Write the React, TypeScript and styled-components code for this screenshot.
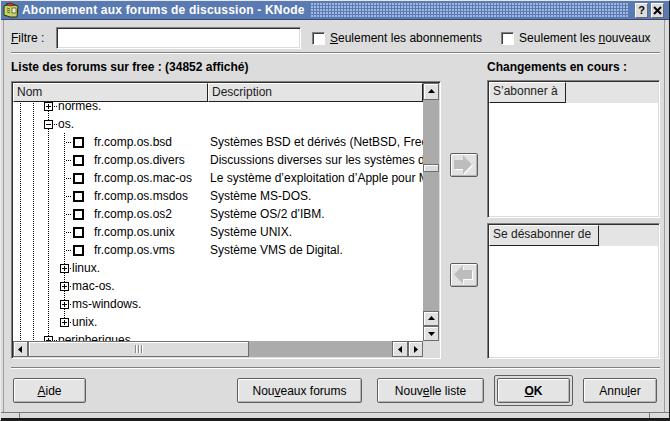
import React from 'react';
import styled, { createGlobalStyle, css } from 'styled-components';

const GlobalStyle = createGlobalStyle`
  html, body {
    margin: 0;
    padding: 0;
    background: #dcdcdc;
  }
  body {
    font-family: "Liberation Sans", Arial, sans-serif;
    font-size: 12px;
    color: #000;
  }
  * {
    box-sizing: border-box;
  }
`;

const raised = css`
  border: 1px solid;
  border-color: #fff #6a6a6a #6a6a6a #fff;
`;

const sunken = css`
  border: 1px solid;
  border-color: #808080 #fff #fff #808080;
  box-shadow: inset 1px 1px 0 #303030, inset -1px -1px 0 #dcdcdc;
`;

const Window = styled.div`
  width: 670px;
  height: 421px;
  display: flex;
  flex-direction: column;
  background: #dcdcdc;
  border: 1px solid;
  border-color: #e8e8e8 #202020 #202020 #e8e8e8;
  overflow: hidden;
`;

const TitleBar = styled.div`
  height: 19px;
  flex: none;
  display: flex;
  align-items: center;
  background: #5a7ab4;
  border-bottom: 1px solid #33496f;
  padding: 0 5px 0 2px;
  color: #fff;
`;

const TitleText = styled.span`
  margin-left: 3px;
  font-weight: bold;
  font-size: 12px;
  letter-spacing: 0.2px;
  white-space: nowrap;
`;

const TitleGrip = styled.div`
  flex: 1;
  align-self: stretch;
  margin: 2px 4px 2px 6px;
  background-image: radial-gradient(circle at 1px 1px, #a3b9e2 0.8px, transparent 1.1px);
  background-size: 3px 3px;
`;

const TitleButton = styled.div`
  width: 13px;
  height: 15px;
  margin-left: 3px;
  display: flex;
  align-items: center;
  justify-content: center;
  background: #dcdcdc;
  ${raised};
  color: #000;
  font-weight: bold;
  font-size: 11px;
  line-height: 1;
`;

const Frame = styled.div`
  flex: 1;
  display: flex;
  flex-direction: column;
  margin: 0 4px 0 2px;
  padding: 7px 4px 0 7px;
  border-left: 1px solid #9c9c9c;
  border-right: 1px solid #9c9c9c;
`;

const BottomBar = styled.div`
  height: 8px;
  flex: none;
  display: flex;
  border-top: 1px solid #7a7a7a;
  border-bottom: 2px solid #1a1a1a;
`;

const GripSegment = styled.div<{ $w?: number }>`
  width: ${(p) => (p.$w ? `${p.$w}px` : 'auto')};
  flex: ${(p) => (p.$w ? 'none' : '1')};
  border-right: 1px solid #7a7a7a;
  &:last-child {
    border-right: none;
  }
`;

const Key = styled.span`
  text-decoration: underline;
`;

const FilterRow = styled.div`
  height: 22px;
  display: flex;
  align-items: center;
  flex: none;
`;

const FieldLabel = styled.span`
  width: 45px;
  flex: none;
`;

const TextInput = styled.input`
  width: 245px;
  height: 22px;
  margin: 0;
  padding: 0 4px;
  background: #fff;
  ${sunken};
  font: inherit;
  outline: none;
`;

const CheckOption = styled.label<{ $ml: number }>`
  display: flex;
  align-items: center;
  gap: 5px;
  margin-left: ${(p) => p.$ml}px;
  white-space: nowrap;
`;

const CheckBox = styled.span`
  width: 13px;
  height: 13px;
  background: #fff;
  border: 1px solid;
  border-color: #808080 #fff #fff #808080;
  box-shadow: inset 1px 1px 0 #404040;
`;

const Separator = styled.div<{ $mt: number }>`
  height: 2px;
  flex: none;
  margin-top: ${(p) => p.$mt}px;
  border-top: 1px solid #808080;
  border-bottom: 1px solid #fff;
`;

const Panels = styled.div`
  height: 305px;
  flex: none;
  display: flex;
`;

const Column = styled.div<{ $w: number }>`
  width: ${(p) => p.$w}px;
  flex: none;
  display: flex;
  flex-direction: column;
`;

const SectionLabel = styled.div<{ $h: number }>`
  height: ${(p) => p.$h}px;
  flex: none;
  padding-top: 6px;
  line-height: 15px;
  font-weight: bold;
  white-space: nowrap;
`;

const ListBox = styled.div`
  height: 278px;
  display: grid;
  grid-template-columns: 1fr 16px;
  grid-template-rows: 1fr 16px;
  ${sunken};
  padding: 1px;
  background: #dcdcdc;
`;

const ListMain = styled.div`
  display: flex;
  flex-direction: column;
  min-height: 0;
  overflow: hidden;
  background: #fff;
`;

const Header = styled.div`
  height: 19px;
  flex: none;
  display: flex;
  background: #e4e4e4;
`;

const HeaderCell = styled.div<{ $w?: number; $fill?: boolean }>`
  width: ${(p) => (p.$w ? `${p.$w}px` : 'auto')};
  flex: ${(p) => (p.$fill ? '1' : 'none')};
  padding: ${(p) => (p.$w || p.$fill ? '0 3px' : '0 7px 0 3px')};
  line-height: 17px;
  background: #e4e4e4;
  color: #202020;
  white-space: nowrap;
  ${raised};
  border-right-color: #202020;
  border-bottom-color: #202020;
`;

const Viewport = styled.div`
  flex: 1;
  overflow: hidden;
`;

const Rows = styled.div`
  margin-top: -5px;
`;

const Row = styled.div`
  height: 18px;
  display: flex;
  line-height: 18px;
  white-space: nowrap;
`;

const NameCell = styled.div`
  width: 195px;
  flex: none;
  display: flex;
  overflow: hidden;
`;

const DescCell = styled.div`
  padding-left: 2px;
`;

const Guide = styled.span<{ $w: number; $v: 'full' | 'top'; $h?: boolean }>`
  position: relative;
  flex: none;
  width: ${(p) => p.$w}px;
  height: 18px;
  padding: 5px 0 0 3px;
  &::before {
    content: '';
    position: absolute;
    left: 7px;
    top: 0;
    width: 1px;
    height: ${(p) => (p.$v === 'top' ? '9px' : '18px')};
    background: repeating-linear-gradient(to bottom, #000 0 1px, transparent 1px 2px);
  }
  &::after {
    content: '';
    display: ${(p) => (p.$h ? 'block' : 'none')};
    position: absolute;
    left: 8px;
    right: 0;
    top: 9px;
    height: 1px;
    background: repeating-linear-gradient(to right, transparent 0 1px, #000 1px 2px);
  }
`;

const ExpanderBox = styled.svg`
  position: relative;
  z-index: 1;
  display: block;
`;

const TreeCheck = styled.span`
  width: 11px;
  height: 11px;
  flex: none;
  margin: 4px 0 0 2px;
  border: 2px solid #000;
  background: #fff;
`;

const NodeLabel = styled.span<{ $ml: number }>`
  margin-left: ${(p) => p.$ml}px;
`;

const VScroll = styled.div`
  grid-row: 1;
  grid-column: 2;
  display: flex;
  flex-direction: column;
`;

const HScroll = styled.div`
  grid-row: 2;
  grid-column: 1;
  display: flex;
`;

const Corner = styled.div`
  grid-row: 2;
  grid-column: 2;
  background: #dcdcdc;
`;

const ScrollButton = styled.div<{ $w: number; $h: number }>`
  width: ${(p) => p.$w}px;
  height: ${(p) => p.$h}px;
  flex: none;
  display: flex;
  align-items: center;
  justify-content: center;
  background: #e0e0e0;
  border: 1px solid #6e6e6e;
  box-shadow: inset 1px 1px 0 #fff;
`;

const Trough = styled.div<{ $vertical?: boolean }>`
  flex: 1;
  background: #ababab;
  display: flex;
  flex-direction: ${(p) => (p.$vertical ? 'column' : 'row')};
`;

const Thumb = styled.div<{ $w: number; $h: number; $offset?: number }>`
  width: ${(p) => (p.$w ? `${p.$w}px` : '100%')};
  height: ${(p) => (p.$h ? `${p.$h}px` : '100%')};
  margin-top: ${(p) => p.$offset ?? 0}px;
  flex: none;
  display: flex;
  align-items: center;
  justify-content: center;
  background: #dcdcdc;
  border: 1px solid #6e6e6e;
  box-shadow: inset 1px 1px 0 #fff;
`;

const GripLines = styled.span`
  width: 8px;
  height: 8px;
  background: repeating-linear-gradient(to right, #8a8a8a 0 1px, #fff 1px 2px, transparent 2px 3px);
`;

const MoveColumn = styled.div`
  width: 46px;
  flex: none;
  display: flex;
  flex-direction: column;
  align-items: center;
  padding-top: 99px;
  gap: 86px;
`;

const ArrowButton = styled.div`
  width: 28px;
  height: 24px;
  display: flex;
  align-items: center;
  justify-content: center;
  background: #e2e2e2;
  border: 1px solid #5e5e5e;
  border-radius: 2px;
  box-shadow: inset 1px 1px 0 #fff, inset -1px -1px 0 #b4b4b4;
`;

const ChangeBox = styled.div<{ $h: number; $mt?: number }>`
  height: ${(p) => p.$h}px;
  margin-top: ${(p) => p.$mt ?? 0}px;
  flex: none;
  display: flex;
  flex-direction: column;
  ${sunken};
  padding: 1px;
  background: #fff;
`;

const BoxHeader = styled.div`
  height: 21px;
  flex: none;
  display: flex;
  background: #e4e4e4;
`;

const BoxBody = styled.div`
  flex: 1;
  background: #fff;
`;

const ButtonRow = styled.div`
  height: 31px;
  margin-top: 6px;
  flex: none;
  display: flex;
  align-items: center;
  padding: 0 3px 0 2px;
`;

const PushButton = styled.div<{ $w: number; $ml?: number; $bold?: boolean }>`
  width: ${(p) => p.$w}px;
  height: 25px;
  margin-left: ${(p) => p.$ml ?? 0}px;
  flex: none;
  display: flex;
  align-items: center;
  justify-content: center;
  background: #e4e4e4;
  border: 1px solid #5e5e5e;
  border-radius: 2px;
  box-shadow: inset 1px 1px 0 #fff, inset -1px -1px 0 #b4b4b4;
  font-weight: ${(p) => (p.$bold ? 'bold' : 'normal')};
  white-space: nowrap;
`;

const DefaultFrame = styled.div<{ $ml: number }>`
  margin-left: ${(p) => p.$ml}px;
  padding: 2px;
  border: 1px solid #5e5e5e;
  border-radius: 2px;
`;

const Spacer = styled.div`
  flex: 1;
`;

type TreeNode = {
  label: string;
  depth: 1 | 2;
  kind: 'expand' | 'collapse' | 'check';
  desc?: string;
  last?: boolean;
};

const nodes: TreeNode[] = [
  { label: 'normes.', depth: 1, kind: 'expand' },
  { label: 'os.', depth: 1, kind: 'collapse' },
  { label: 'fr.comp.os.bsd', depth: 2, kind: 'check', desc: 'Systèmes BSD et dérivés (NetBSD, FreeBSD, OpenBSD).' },
  { label: 'fr.comp.os.divers', depth: 2, kind: 'check', desc: 'Discussions diverses sur les systèmes d’exploitation.' },
  { label: 'fr.comp.os.mac-os', depth: 2, kind: 'check', desc: 'Le système d’exploitation d’Apple pour Macintosh.' },
  { label: 'fr.comp.os.msdos', depth: 2, kind: 'check', desc: 'Système MS-DOS.' },
  { label: 'fr.comp.os.os2', depth: 2, kind: 'check', desc: 'Système OS/2 d’IBM.' },
  { label: 'fr.comp.os.unix', depth: 2, kind: 'check', desc: 'Système UNIX.' },
  { label: 'fr.comp.os.vms', depth: 2, kind: 'check', desc: 'Système VMS de Digital.' },
  { label: 'linux.', depth: 2, kind: 'expand' },
  { label: 'mac-os.', depth: 2, kind: 'expand' },
  { label: 'ms-windows.', depth: 2, kind: 'expand' },
  { label: 'unix.', depth: 2, kind: 'expand', last: true },
  { label: 'peripheriques.', depth: 1, kind: 'expand' },
];

const Expander = ({ open }: { open: boolean }) => (
  <ExpanderBox width="9" height="9" viewBox="0 0 9 9">
    <rect x="0.5" y="0.5" width="8" height="8" fill="#fff" stroke="#000" />
    <path d="M2 4.5h5" stroke="#000" />
    {!open && <path d="M4.5 2v5" stroke="#000" />}
  </ExpanderBox>
);

const Triangle = ({ dir }: { dir: 'up' | 'down' | 'left' | 'right' }) => {
  const points = {
    up: '0,5 3.5,1 7,5',
    down: '0,2 3.5,6 7,2',
    left: '5,0 1,3.5 5,7',
    right: '2,0 6,3.5 2,7',
  }[dir];
  return (
    <svg width="7" height="7" viewBox="0 0 7 7">
      <polygon points={points} fill="#000" />
    </svg>
  );
};

const MoveArrow = ({ dir }: { dir: 'left' | 'right' }) => {
  const points =
    dir === 'right'
      ? '0,5 9,5 9,0 18,9.5 9,19 9,14 0,14'
      : '18,5 9,5 9,0 0,9.5 9,19 9,14 18,14';
  return (
    <svg width="20" height="20" viewBox="0 0 20 20">
      <polygon points={points} fill="#fff" transform="translate(1 1)" />
      <polygon points={points} fill="#bdbdbd" />
    </svg>
  );
};

const KNodeIcon = () => (
  <svg width="16" height="16" viewBox="0 0 16 16">
    <polygon points="1,4 8,2 15,4 14,15 7,15 1,13" fill="#c6d46a" stroke="#2e3000" strokeWidth="1" />
    <polygon points="3,2 8,1 12,3 7,4" fill="#d83a2a" stroke="#3a0000" strokeWidth="0.6" />
    <path d="M4 6l3 1M4 8l3 1M4 10l3 1" stroke="#4a5200" strokeWidth="0.8" />
    <rect x="9" y="6" width="4" height="5" fill="#f4f0d8" stroke="#2e3000" strokeWidth="0.6" />
  </svg>
);

const CloseGlyph = () => (
  <svg width="9" height="9" viewBox="0 0 9 9">
    <path d="M1 1l7 7M8 1l-7 7" stroke="#000" strokeWidth="2" />
  </svg>
);

const TreeRow = ({ node }: { node: TreeNode }) => {
  const { label, depth, kind, desc, last } = node;
  return (
    <Row>
      <NameCell>
        <Guide $w={13} $v="full" />
        <Guide $w={15} $v="full" />
        {depth === 1 ? (
          <Guide $w={16} $v="full" $h>
            <Expander open={kind === 'collapse'} />
          </Guide>
        ) : (
          <Guide $w={16} $v="full" />
        )}
        {depth === 2 &&
          (kind === 'check' ? (
            <Guide $w={14} $v="full" $h />
          ) : (
            <Guide $w={14} $v={last ? 'top' : 'full'} $h>
              <Expander open={false} />
            </Guide>
          ))}
        {kind === 'check' && <TreeCheck />}
        <NodeLabel $ml={kind === 'check' ? 10 : 1}>{label}</NodeLabel>
      </NameCell>
      {desc && <DescCell>{desc}</DescCell>}
    </Row>
  );
};

const App = () => {
  return (
    <>
      <GlobalStyle />
      <Window>
        <TitleBar>
          <KNodeIcon />
          <TitleText>Abonnement aux forums de discussion - KNode</TitleText>
          <TitleGrip />
          <TitleButton>?</TitleButton>
          <TitleButton>
            <CloseGlyph />
          </TitleButton>
        </TitleBar>

        <Frame>
          <FilterRow>
            <FieldLabel>
              <Key>F</Key>iltre :
            </FieldLabel>
            <TextInput type="text" defaultValue="" />
            <CheckOption $ml={11}>
              <CheckBox />
              <span>
                <Key>S</Key>eulement les abonnements
              </span>
            </CheckOption>
            <CheckOption $ml={19}>
              <CheckBox />
              <span>
                Seulement les <Key>n</Key>ouveaux
              </span>
            </CheckOption>
          </FilterRow>

          <Separator $mt={3} />

          <Panels>
            <Column $w={430}>
              <SectionLabel $h={27}>Liste des forums sur free : (34852 affiché)</SectionLabel>
              <ListBox>
                <ListMain>
                  <Header>
                    <HeaderCell $w={195}>Nom</HeaderCell>
                    <HeaderCell $fill>Description</HeaderCell>
                  </Header>
                  <Viewport>
                    <Rows>
                      {nodes.map((node) => (
                        <TreeRow key={node.label + node.depth} node={node} />
                      ))}
                    </Rows>
                  </Viewport>
                </ListMain>
                <VScroll>
                  <ScrollButton $w={16} $h={17}>
                    <Triangle dir="up" />
                  </ScrollButton>
                  <Trough $vertical>
                    <Thumb $w={0} $h={8} $offset={64} />
                  </Trough>
                  <ScrollButton $w={16} $h={15}>
                    <Triangle dir="up" />
                  </ScrollButton>
                  <ScrollButton $w={16} $h={15}>
                    <Triangle dir="down" />
                  </ScrollButton>
                </VScroll>
                <HScroll>
                  <ScrollButton $w={15} $h={16}>
                    <Triangle dir="left" />
                  </ScrollButton>
                  <Trough>
                    <Thumb $w={221} $h={0}>
                      <GripLines />
                    </Thumb>
                  </Trough>
                  <ScrollButton $w={16} $h={16}>
                    <Triangle dir="left" />
                  </ScrollButton>
                  <ScrollButton $w={15} $h={16}>
                    <Triangle dir="right" />
                  </ScrollButton>
                </HScroll>
                <Corner />
              </ListBox>
            </Column>

            <MoveColumn>
              <ArrowButton>
                <MoveArrow dir="right" />
              </ArrowButton>
              <ArrowButton>
                <MoveArrow dir="left" />
              </ArrowButton>
            </MoveColumn>

            <Column $w={173}>
              <SectionLabel $h={26}>Changements en cours :</SectionLabel>
              <ChangeBox $h={138}>
                <BoxHeader>
                  <HeaderCell>S’abonner à</HeaderCell>
                </BoxHeader>
                <BoxBody />
              </ChangeBox>
              <ChangeBox $h={136} $mt={5}>
                <BoxHeader>
                  <HeaderCell>Se désabonner de</HeaderCell>
                </BoxHeader>
                <BoxBody />
              </ChangeBox>
            </Column>
          </Panels>

          <Separator $mt={8} />

          <ButtonRow>
            <PushButton $w={73}>
              <span>
                <Key>A</Key>ide
              </span>
            </PushButton>
            <Spacer />
            <PushButton $w={125}>
              <span>
                Nou<Key>v</Key>eaux forums
              </span>
            </PushButton>
            <PushButton $w={107} $ml={15}>
              <span>
                Nouv<Key>e</Key>lle liste
              </span>
            </PushButton>
            <DefaultFrame $ml={10}>
              <PushButton $w={73} $bold>
                <span>
                  <Key>O</Key>K
                </span>
              </PushButton>
            </DefaultFrame>
            <PushButton $w={74} $ml={10}>
              <span>
                Annu<Key>l</Key>er
              </span>
            </PushButton>
          </ButtonRow>
        </Frame>

        <BottomBar>
          <GripSegment $w={19} />
          <GripSegment />
          <GripSegment $w={19} />
        </BottomBar>
      </Window>
    </>
  );
};

export default App;
